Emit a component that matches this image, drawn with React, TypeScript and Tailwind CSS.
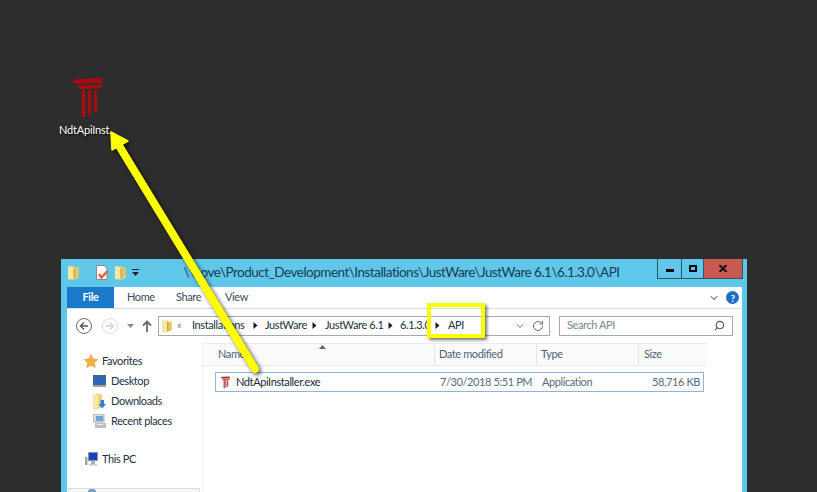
import React from 'react'
import { ChevronDown, RotateCw, Search } from 'lucide-react'

const Pillar = ({ className }: { className?: string }) => (
  <svg className={className} viewBox="0 0 34 44" fill="none" stroke="#a80c10" strokeLinecap="round">
    <path d="M31 2.5 L6 3.5 L1.5 5.5 L6 7.5 L31 6" fill="#a80c10" strokeWidth="1" />
    <path d="M31 9 L11 10 L6 11.5 L11 13 L31 11" fill="#a80c10" strokeWidth="1" />
    <path d="M12.5 15.5 V40" strokeWidth="3.4" />
    <path d="M18.5 15.5 V37.5" strokeWidth="3.2" />
    <path d="M24.5 15.5 V34.5" strokeWidth="3" />
  </svg>
)

const Folder = ({ className }: { className?: string }) => (
  <svg className={className} viewBox="0 0 12 15">
    <path d="M0 1 H7 L8 2 H11.5 V13 L7 15 H0 Z" fill="#f1d77e" />
    <path d="M0 1 H3 L6 3 V14.5 L0 14 Z" fill="#f8e9a8" />
    <path d="M6 3 L8 2 V13 L6 14.5 Z" fill="#c9a845" />
    <path d="M8 3 H11.5 V12.5 H8 Z" fill="#e8c45e" />
  </svg>
)

const Caret = ({ className }: { className?: string }) => (
  <svg className={`w-[5px] h-[7px] shrink-0 ${className ?? ''}`} viewBox="0 0 5 7">
    <path d="M0.5 0 L4.5 3.5 L0.5 7 Z" fill="#1c1c1c" />
  </svg>
)

const navText = 'text-[#1f3148] whitespace-nowrap'

const NavigationPane = () => (
  <div className="w-[136px] shrink-0 h-full flex flex-col pt-[9px] border-r border-[#f4f4f4]">
    <div className="h-[20px] flex items-center pl-[17px] gap-[4px]">
      <svg className="w-[14px] h-[14px]" viewBox="0 0 24 24">
        <path d="M12 1 L15.5 8.5 L23.5 9.5 L17.5 15 L19.2 23 L12 19 L4.8 23 L6.5 15 L0.5 9.5 L8.5 8.5 Z" fill="#f6b23f" stroke="#e08a2c" />
      </svg>
      <span className={navText}>Favorites</span>
    </div>
    <div className="h-[20px] flex items-center pl-[26px] gap-[5px]">
      <svg className="w-[13px] h-[12px]" viewBox="0 0 13 12">
        <rect x="0" y="0" width="13" height="10" fill="#51606f" />
        <rect x="1" y="1" width="11" height="8" fill="#2f66bd" />
        <rect x="0" y="10" width="13" height="2" fill="#9aa4ad" />
      </svg>
      <span className={navText}>Desktop</span>
    </div>
    <div className="h-[20px] flex items-center pl-[26px] gap-[5px]">
      <svg className="w-[13px] h-[15px]" viewBox="0 0 13 15">
        <path d="M0 0 H8 L9 1 V13 L5 15 H0 Z" fill="#efd27a" />
        <path d="M0 0 H3 L5 2 V14.5 L0 14 Z" fill="#f8e9a8" />
        <path d="M7.5 6 H11 V10 H13 L9.2 14.5 L5.5 10 H7.5 Z" fill="#2f7fd6" />
      </svg>
      <span className={navText}>Downloads</span>
    </div>
    <div className="h-[20px] flex items-center pl-[26px] gap-[5px]">
      <svg className="w-[13px] h-[14px]" viewBox="0 0 13 14">
        <rect x="0" y="0" width="11" height="8" fill="#d5dbe0" stroke="#a9b2ba" strokeWidth="1" />
        <rect x="3" y="2" width="7" height="5" fill="#6ea6cf" />
        <rect x="2" y="9" width="11" height="5" fill="#b9c0c6" />
        <rect x="4" y="10" width="6" height="1" fill="#eef1f3" />
      </svg>
      <span className={navText}>Recent places</span>
    </div>
    <div className="h-[20px] mt-[18px] flex items-center pl-[18px] gap-[4px]">
      <svg className="w-[13px] h-[14px]" viewBox="0 0 13 14">
        <rect x="0" y="5" width="2.5" height="8" fill="#9aa89f" />
        <rect x="3" y="0" width="10" height="9" fill="#8d9aa5" />
        <rect x="4" y="1" width="8" height="7" fill="#1a3fc4" />
        <rect x="6" y="9" width="4" height="3" fill="#aab2b8" />
        <rect x="4" y="12" width="8" height="1.5" fill="#c4cace" />
      </svg>
      <span className={navText}>This PC</span>
    </div>
    <div className="mt-auto ml-[1px] mr-[2px] h-[4px] bg-[#f6f6f6] border-t border-x border-[#dcdcdc] pl-[19px]">
      <div className="w-[8px] h-[3px] rounded-t-full bg-[#6fa3c9]" />
    </div>
  </div>
)

const FileList = () => (
  <div className="flex-1 pt-[1px]">
    <div className="relative w-[504px] h-[23px] bg-[#fbfbfb] border-y border-[#ececec] flex items-center text-[#4d5f78]">
      <div className="w-[232px] h-full pl-[15px] flex items-center border-r border-[#e4e4e4]">Name</div>
      <div className="w-[102px] h-full pl-[4px] flex items-center border-r border-[#e4e4e4]">Date modified</div>
      <div className="w-[102px] h-full pl-[4px] flex items-center border-r border-[#e4e4e4]">Type</div>
      <div className="flex-1 h-full pl-[5px] flex items-center">Size</div>
      <svg className="absolute left-[116px] top-[1px] w-[7px] h-[4px]" viewBox="0 0 7 4">
        <path d="M3.5 0 L7 4 H0 Z" fill="#5a6b7c" />
      </svg>
    </div>
    <div className="mt-[6px] ml-[12px] w-[489px] h-[20px] border border-[#92b3d8] flex items-center">
      <Pillar className="w-[11px] h-[13px] ml-[4px] shrink-0" />
      <span className="ml-[5px] w-[204px] text-[#1f2a3a] whitespace-nowrap">NdtApiInstaller.exe</span>
      <span className="w-[102px] text-[#5c6b7a] whitespace-nowrap">7/30/2018 5:51 PM</span>
      <span className="w-[100px] text-[#5c6b7a]">Application</span>
      <span className="flex-1 text-right pr-[3px] text-[#5c6b7a] whitespace-nowrap">58,716 KB</span>
    </div>
  </div>
)

export default function App() {
  return (
    <div
      className="relative w-[817px] h-[492px] overflow-hidden bg-[#2d2d2d] flex flex-col"
      style={{ fontFamily: 'Lato, "Open Sans", sans-serif' }}
    >
      {/* Desktop shortcut */}
      <div className="pt-[76px] pl-[59px] w-[60px]">
        <Pillar className="w-[34px] h-[44px] ml-[12px]" />
        <div className="mt-[3px] text-[11px] tracking-[-0.2px] leading-[14px] text-white whitespace-nowrap [text-shadow:1px_1px_2px_#000]">
          NdtApiInst.
        </div>
      </div>

      {/* Explorer window */}
      <div className="mt-auto ml-[61px] w-[686px] h-[233px] bg-[#5fc8ea] flex flex-col pl-[6px] pr-[5px] text-[11px] tracking-[-0.4px]">
        <div className="h-[28px] shrink-0 flex items-start">
          <div className="w-[83px] h-full flex items-center pb-[1px] pl-[1px] shrink-0">
            <Folder className="w-[11px] h-[15px]" />
            <div className="ml-[8px] w-px h-[13px] bg-[#8fb6c8]" />
            <svg className="ml-[8px] w-[12px] h-[15px]" viewBox="0 0 12 15">
              <path d="M0.5 0.5 H8 L11 3.5 V14.5 H0.5 Z" fill="#fff" stroke="#8a8a8a" />
              <path d="M3 9 L5.5 12.5 L11.5 6" fill="none" stroke="#e0633a" strokeWidth="2.4" />
            </svg>
            <Folder className="ml-[7px] w-[11px] h-[15px]" />
            <svg className="ml-[6px] w-[7px] h-[7px]" viewBox="0 0 7 7">
              <rect x="0" y="0" width="7" height="1" fill="#222" />
              <path d="M0 3 H7 L3.5 7 Z" fill="#222" />
            </svg>
            <div className="ml-[8px] w-px h-[13px] bg-[#8fb6c8]" />
          </div>
          <div className="flex-1 h-full flex items-center justify-center pb-[1px] pr-[4px] text-[13.5px] tracking-[-0.5px] text-[#1b3a4f] whitespace-nowrap">
            \\Love\Product_Development\Installations\JustWare\JustWare 6.1\6.1.3.0\API
          </div>
          <div className="flex h-[20px] w-[86px] mr-[-1px] shrink-0 border border-t-0 border-[#35505f]">
            <div className="w-[24px] flex items-center justify-center border-r border-[#35505f]">
              <div className="w-[8px] h-[3px] mt-[3px] bg-black" />
            </div>
            <div className="w-[22px] flex items-center justify-center border-r border-[#35505f]">
              <div className="w-[8px] h-[7px] border-2 border-black" />
            </div>
            <div className="flex-1 bg-[#c75a50] flex items-center justify-center">
              <svg className="w-[8px] h-[7px]" viewBox="0 0 8 7">
                <path d="M0.5 0 L7.5 7 M7.5 0 L0.5 7" stroke="#111" strokeWidth="2" />
              </svg>
            </div>
          </div>
        </div>

        <div className="flex-1 min-h-0 bg-white flex flex-col">
          {/* Ribbon tabs */}
          <div className="h-[22px] shrink-0 flex items-center border-b border-[#dadbdc] text-[#3c4a5a]">
            <div className="w-[47px] h-full bg-[#1979ca] text-white flex items-center justify-center font-bold">File</div>
            <span className="ml-[13px] w-[25px]">Home</span>
            <span className="ml-[24px] w-[25px]">Share</span>
            <span className="ml-[24px]">View</span>
            <ChevronDown className="ml-auto w-[12px] h-[12px] text-[#8a949c]" strokeWidth={2.5} />
            <div className="ml-[6px] mr-[3px] w-[13px] h-[13px] rounded-full bg-[#1f6fc4] text-white flex items-center justify-center text-[10px] font-bold leading-none">?</div>
          </div>

          {/* Address row */}
          <div className="h-[33px] shrink-0 flex items-center">
            <div className="ml-[9px] w-[16px] h-[16px] rounded-full border border-[#6f6f6f] flex items-center justify-center">
              <svg className="w-[10px] h-[10px]" viewBox="0 0 10 10" fill="none" stroke="#555" strokeWidth="1.4">
                <path d="M9 5 H1.5 M5 1.5 L1.5 5 L5 8.5" />
              </svg>
            </div>
            <div className="ml-[10px] w-[16px] h-[16px] rounded-full border border-[#dcdcdc] flex items-center justify-center">
              <svg className="w-[10px] h-[10px]" viewBox="0 0 10 10" fill="none" stroke="#d4d4d4" strokeWidth="1.4">
                <path d="M1 5 H8.5 M5 1.5 L8.5 5 L5 8.5" />
              </svg>
            </div>
            <svg className="ml-[9px] w-[7px] h-[4px]" viewBox="0 0 7 4">
              <path d="M0 0 H7 L3.5 4 Z" fill="#8c8c8c" />
            </svg>
            <svg className="ml-[8px] w-[10px] h-[12px]" viewBox="0 0 10 12" fill="none" stroke="#6a6a6a" strokeWidth="1.8">
              <path d="M5 12 V1.5 M1 5.5 L5 1.5 L9 5.5" />
            </svg>
            <div className="ml-[6px] w-[392px] h-[20px] border border-[#a8a8a8] flex items-center text-[#22303e] whitespace-nowrap">
              <Folder className="ml-[3px] w-[10px] h-[14px] shrink-0" />
              <span className="ml-[5px] w-[8px] text-[#7d8790] text-[11px]">«</span>
              <span className="ml-[7px] w-[60px] shrink-0">Installations</span>
              <Caret className="ml-[1px]" />
              <span className="ml-[7px] w-[44px] shrink-0">JustWare</span>
              <Caret className="ml-[3px]" />
              <span className="ml-[8px] w-[60px] shrink-0">JustWare 6.1</span>
              <Caret className="ml-[3px]" />
              <span className="ml-[7px] w-[32px] shrink-0">6.1.3.0</span>
              <Caret className="ml-[3px]" />
              <span className="ml-[8px] w-[50px] shrink-0">API</span>
              <ChevronDown className="ml-[16px] w-[12px] h-[12px] text-[#6a6a6a]" strokeWidth={2} />
              <RotateCw className="ml-[6px] w-[12px] h-[12px] text-[#6a6a6a]" strokeWidth={2} />
            </div>
            <div className="ml-[9px] w-[174px] h-[20px] border border-[#a8a8a8] flex items-center px-[7px] text-[#7b8792]">
              <span>Search API</span>
              <Search className="ml-auto w-[11px] h-[11px] text-[#555] -scale-x-100" strokeWidth={2.5} />
            </div>
          </div>

          {/* Content */}
          <div className="flex-1 min-h-0 flex">
            <NavigationPane />
            <FileList />
          </div>
        </div>
      </div>

      {/* Callout box */}
      <div className="absolute left-[427px] top-[303px] w-[58px] h-[35px] border-4 border-[#ffff00] shadow-[2px_2px_3px_rgba(0,0,0,0.55)]" />

      {/* Callout arrow */}
      <svg className="absolute inset-0 w-[817px] h-[492px] pointer-events-none drop-shadow-[2px_2px_2px_rgba(0,0,0,0.65)]" viewBox="0 0 817 492">
        <path d="M255 369 L118 144" stroke="#ffff00" strokeWidth="8" strokeLinecap="round" fill="none" />
        <path d="M111 132 L128 141 L112 150 Z" fill="#ffff00" stroke="#ffff00" strokeWidth="1.5" strokeLinejoin="round" />
      </svg>
    </div>
  )
}
